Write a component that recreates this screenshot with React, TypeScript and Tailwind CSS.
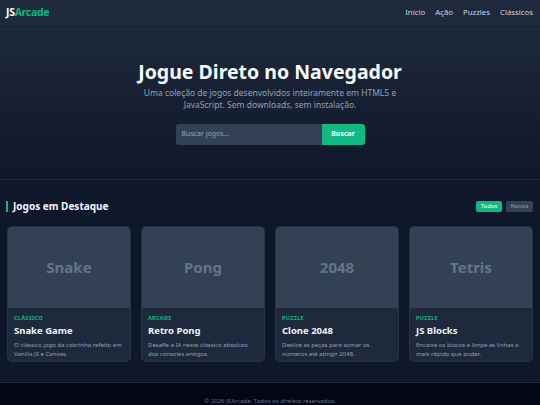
import React from "react";

const games = [
  { img: "Snake", cat: "Clássico", title: "Snake Game", desc: "O clássico jogo da cobrinha refeito em Vanilla JS e Canvas." },
  { img: "Pong", cat: "Arcade", title: "Retro Pong", desc: "Desafie a IA neste clássico absoluto dos consoles antigos." },
  { img: "2048", cat: "Puzzle", title: "Clone 2048", desc: "Deslize as peças para somar os números até atingir 2048." },
  { img: "Tetris", cat: "Puzzle", title: "JS Blocks", desc: "Encaixe os blocos e limpe as linhas o mais rápido que puder." },
];

export default function App() {
  return (
    <div className="w-[540px] min-h-[405px] bg-[#0f172a] text-slate-100" style={{ fontFamily: '"Noto Sans", sans-serif' }}>
      <header className="h-[27px] bg-[#1e293b] border-b border-[#182234] flex items-center justify-between pl-[6px] pr-[7px]">
        <div className="text-[10.5px] font-bold tracking-[-0.3px]">
          <span className="text-white">JS</span>
          <span className="text-[#10b981]">Arcade</span>
        </div>
        <nav className="flex gap-[10px] text-[7.8px] text-slate-300">
          <span>Início</span>
          <span>Ação</span>
          <span>Puzzles</span>
          <span>Clássicos</span>
        </nav>
      </header>

      <section className="h-[153px] bg-gradient-to-b from-[#1e293b] to-[#0f172a] border-b border-[#1e293b] flex flex-col items-center pt-[31px]">
        <h1 className="text-[19.5px] font-bold leading-[27px] text-slate-50">Jogue Direto no Navegador</h1>
        <p className="mt-[2px] text-[8.5px] leading-[12px] text-slate-400 text-center w-[260px]">
          Uma coleção de jogos desenvolvidos inteiramente em HTML5 e JavaScript. Sem downloads, sem instalação.
        </p>
        <div className="mt-[13px] flex h-[21px]">
          <div className="w-[146px] bg-[#334155] rounded-l-[3px] flex items-center pl-[6px] text-[7px] text-slate-400">Buscar jogos...</div>
          <div className="w-[43px] bg-[#10b981] rounded-r-[3px] flex items-center justify-center text-[7px] font-bold text-white">Buscar</div>
        </div>
      </section>

      <section className="px-[7px] pt-[20px] pb-[20px]">
        <div className="flex items-center justify-between h-[12px]">
          <div className="flex items-center">
            <div className="w-[2px] h-[11px] bg-[#10b981] mr-[5px] -ml-[1px]" />
            <h2 className="text-[10px] font-bold text-slate-100">Jogos em Destaque</h2>
          </div>
          <div className="flex gap-[4px]">
            <div className="h-[11px] w-[26px] rounded-[2px] bg-[#10b981] text-white text-[6px] flex items-center justify-center">Todos</div>
            <div className="h-[11px] w-[27px] rounded-[2px] bg-[#334155] text-slate-400 text-[6px] flex items-center justify-center">Novos</div>
          </div>
        </div>

        <div className="mt-[14px] grid grid-cols-4 gap-[10px]">
          {games.map((g) => (
            <div key={g.title} className="h-[136px] rounded-[5px] bg-[#1e293b] border border-[#253349] overflow-hidden flex flex-col">
              <div className="h-[81px] bg-[#334155] flex items-center justify-center text-[15px] font-bold text-[#64748b]">{g.img}</div>
              <div className="px-[6px] pt-[6px]">
                <div className="text-[5.5px] font-bold tracking-[0.3px] uppercase text-[#10b981] leading-[8px]">{g.cat}</div>
                <div className="mt-[3px] text-[9.5px] font-bold text-slate-100 leading-[12px]">{g.title}</div>
                <div className="mt-[4px] text-[6px] leading-[8.5px] text-slate-400">{g.desc}</div>
              </div>
            </div>
          ))}
        </div>
      </section>

      <footer className="bg-[#020617] border-t border-[#1e293b] pt-[14px] pb-[4px] flex justify-center">
        <span className="text-[6px] text-slate-500">© 2026 JSArcade. Todos os direitos reservados.</span>
      </footer>
    </div>
  );
}
